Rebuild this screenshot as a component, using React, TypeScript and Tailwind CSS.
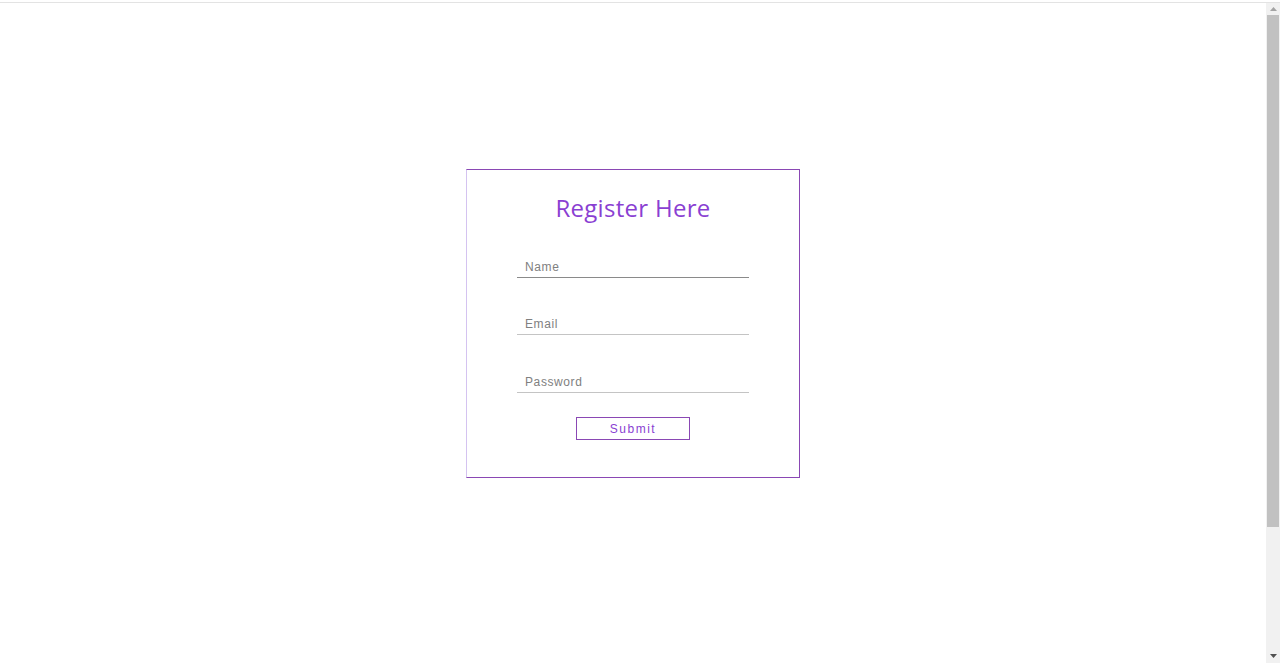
export default function App() {
    return (
        <div className="flex h-[663px] w-[1280px] overflow-hidden bg-white" style={{ fontFamily: '"Liberation Sans", Arial, sans-serif' }}>
            <div className="flex flex-1 flex-col pt-[2px]">
                <div className="flex flex-1 flex-col border-t border-[#e3e3e3]">
                    <form className="mx-auto mt-[166px] flex h-[309px] w-[334px] flex-col items-center border border-[#8a48b4] border-l-[#d4c3f0]">
                        <h1 className="mt-[20px] text-[24px] tracking-[0.3px] text-[#8a3fd2]" style={{ fontFamily: '"Open Sans", "Noto Sans", sans-serif' }}>
                            Register Here
                        </h1>
                        <div className="mt-[31px] flex flex-col gap-[36px]">
                            <input
                                placeholder="Name"
                                className="h-[21px] w-[232px] border-b border-[#8a8a8a] px-2 text-[12px] tracking-[0.6px] outline-none placeholder:text-[#808080]"
                            />
                            <input
                                placeholder="Email"
                                className="h-[21px] w-[232px] border-b border-[#c4c4c4] px-2 text-[12px] tracking-[0.6px] outline-none placeholder:text-[#808080]"
                            />
                            <input
                                placeholder="Password"
                                type="password"
                                className="h-[22px] w-[232px] border-b border-[#c4c4c4] px-2 text-[12px] tracking-[0.6px] outline-none placeholder:text-[#808080]"
                            />
                        </div>
                        <button
                            type="button"
                            className="mt-[24px] h-[23px] w-[114px] border border-[#8a48b4] text-[12px] tracking-[1.5px] text-[#8a3fd2]"
                        >
                            Submit
                        </button>
                    </form>
                </div>
            </div>
            <div className="flex w-[14px] flex-col items-center border-t border-[#e3e3e3] bg-[#f1f1f1] mt-[2px]">
                <div className="flex h-[12px] items-center justify-center">
                    <svg width="7" height="4" viewBox="0 0 7 4"><path d="M0 4 L3.5 0 L7 4 Z" fill="#a3a3a3" /></svg>
                </div>
                <div className="w-[12px] h-[512px] bg-[#c1c1c1]" />
                <div className="flex-1" />
                <div className="flex h-[14px] items-center justify-center">
                    <svg width="7" height="4" viewBox="0 0 7 4"><path d="M0 0 L7 0 L3.5 4 Z" fill="#505050" /></svg>
                </div>
            </div>
        </div>
    )
}
